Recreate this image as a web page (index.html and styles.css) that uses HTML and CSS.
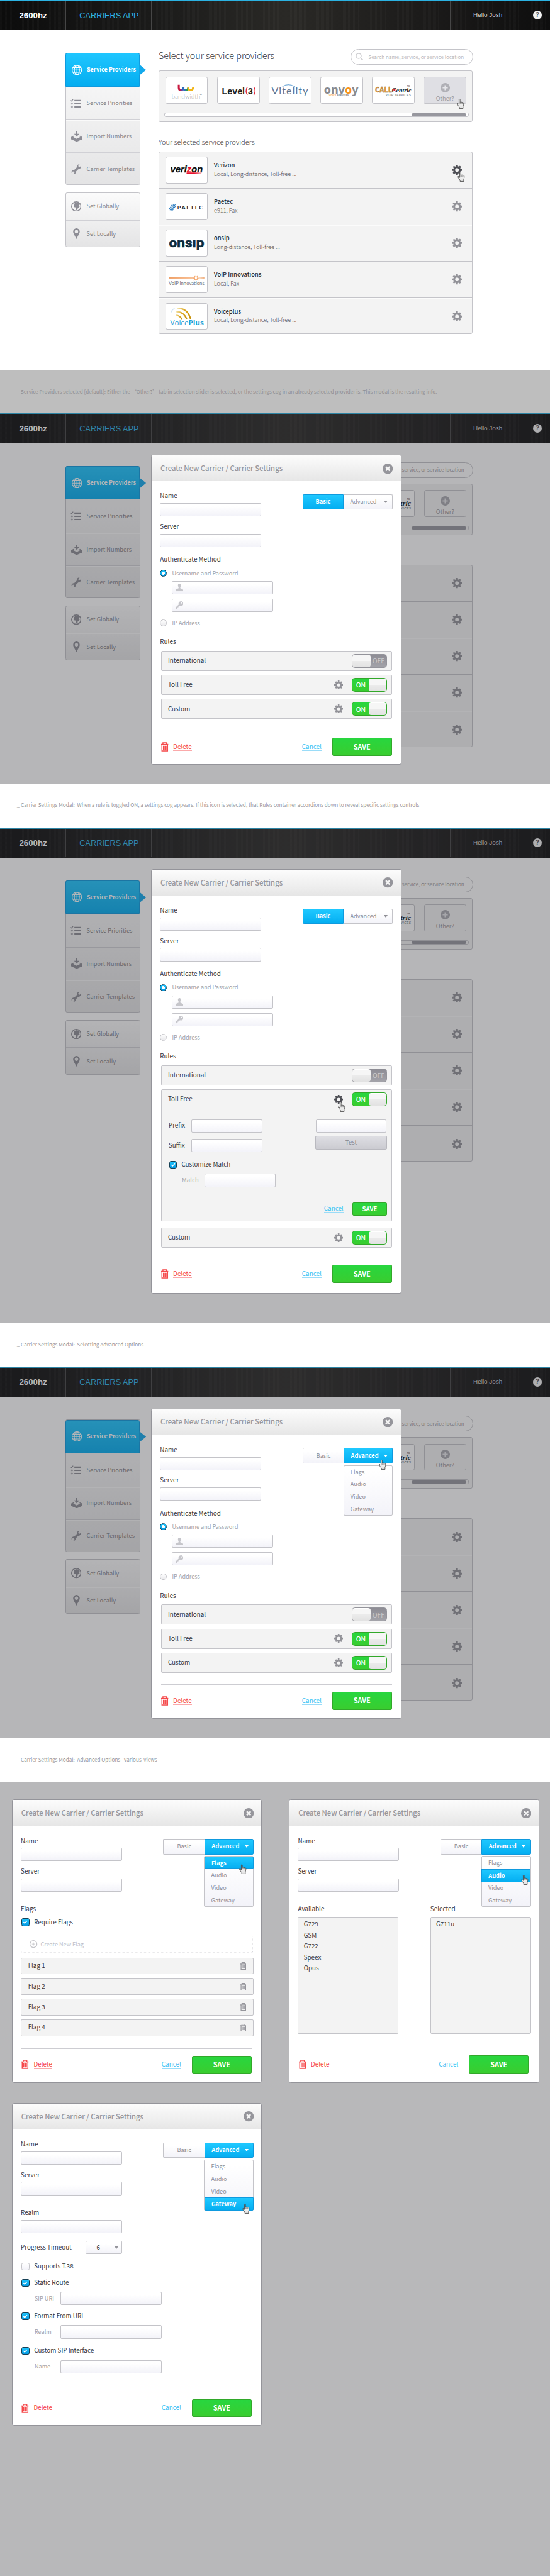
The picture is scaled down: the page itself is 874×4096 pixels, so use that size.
FILE: index.html
```
<!DOCTYPE html>
<html lang="en">
<head>
<meta charset="utf-8">
<title>2600hz Carriers App</title>
<link rel="stylesheet" href="styles.css">
</head>
<body>
<svg class="defs" width="0" height="0">
  <defs>
    <linearGradient id="hand-fill" x1="0" y1="0" x2="0" y2="1"><stop offset="0" stop-color="#fff"/><stop offset="1" stop-color="#e2e2e2"/></linearGradient>
    <linearGradient id="spark-fill" x1="0" x2="1" y1="0" y2="0"><stop offset="0" stop-color="#e8731f"/><stop offset=".7" stop-color="#f7a566"/><stop offset=".77" stop-color="#fff4ea"/><stop offset="1" stop-color="#e8883f"/></linearGradient>
    <linearGradient id="wave-fill" x1="0" x2="1" y1="0" y2="0"><stop offset="0" stop-color="#f3e3a8"/><stop offset=".6" stop-color="#dba41c"/><stop offset="1" stop-color="#c8920a"/></linearGradient>
    <linearGradient id="swoosh-fill" x1="0" x2="1" y1="0" y2="0"><stop offset="0" stop-color="#e8112d"/><stop offset=".5" stop-color="#e8112d"/><stop offset="1" stop-color="#f8c9cf"/></linearGradient>
  </defs>
  <symbol id="gear" viewBox="0 0 24 24"><g fill="none" stroke="currentColor"><circle cx="12" cy="12" r="6.6" stroke-width="4.6"/><path stroke-width="4.4" d="M12 0v4M12 20v4M0 12h4M20 12h4M3.7 3.7l2.6 2.6M17.7 17.7l2.6 2.6M3.7 20.3l2.6-2.6M17.7 6.3l2.6-2.6"/></g></symbol>
  <symbol id="globe" viewBox="0 0 24 24"><g fill="none" stroke="currentColor" stroke-width="1.5"><circle cx="12" cy="12" r="11.1"/><ellipse cx="12" cy="12" rx="6" ry="11.1"/><path d="M12 1v22M1 12h22M2.6 6.4h18.8M2.6 17.6h18.8"/></g></symbol>
  <symbol id="checklist" viewBox="0 0 26 22"><g fill="none" stroke="currentColor"><path stroke-width="3" d="M9 4.2h16.5M9 11.7h16.5M9 19h16.5"/><path stroke-width="1.8" d="M.8 3.6l2 2L6.2 1"/><circle cx="3.4" cy="11.7" r="1.6" stroke-width="1.2"/><circle cx="3.4" cy="19" r="1.6" stroke-width="1.2"/></g></symbol>
  <symbol id="inbox" viewBox="0 0 26 24"><path fill="currentColor" d="M11.2 0h3.4v5.6h4.6L13 12.2 6.8 5.6h4.4zM5.6 10L7 11.6 4.6 13l8.4 4.4 8.4-4.4-2.4-1.4L20.4 10l5.6 3v5.4L13 24 0 18.4V13z"/></symbol>
  <symbol id="wrench" viewBox="0 0 24 24"><path fill="currentColor" d="M22.8 4.2c.8 3.400-.6 6.200-3.600 7-1.400.4-2.400.4-3.200 1.200l-4 4c-.8.8-.8 1.800-1.100 3.200-.5 2.600-3 4.200-5.700 4l2.600-3.300-.9-2.700-2.700-.8L1 20c-.5-3.400 1.300-5.900 4.200-6.500 1.400-.3 2.400-.3 3.200-1.100l4.200-4.200c.8-.8.600-1.700.9-3.100C14.100 2.200 16.600.2 19.600.6l-3 3.200.8 2.500 2.600.8z"/></symbol>
  <symbol id="earth" viewBox="0 0 24 24"><circle cx="12" cy="12" r="10.800" fill="none" stroke="currentColor" stroke-width="2.400"/><path fill="currentColor" d="M6 6.600L9.500 4l4-.9L18 4.600l2.200 3.600-1.600 1 1.200 3-1.800 3-2.200-.6-.8 4.400-2.200 2.200-1.600-2-.4-5-4-.6-1-3.400 1.800-2.600z"/></symbol>
  <symbol id="pin" viewBox="0 0 16 25"><path fill="currentColor" fill-rule="evenodd" d="M8 0a7.700 7.700 0 0 1 7.700 7.700C15.700 12 11 18 8 25 5 18 .3 12 .3 7.700A7.700 7.700 0 0 1 8 0zm0 3.800a4 4 0 1 0 0 8 4 4 0 0 0 0-8z"/></symbol>
  <symbol id="user" viewBox="0 0 18 18"><path fill="currentColor" d="M9 0c2.300 0 3.600 1.700 3.400 4.200-.1 2-.8 3.300-1.400 4.200v2.200c1 1.400 6.600 1.500 7 5V18H0v-2.400c.4-3.500 6-3.600 7-5V8.400c-.6-.9-1.300-2.200-1.400-4.200C5.400 1.700 6.700 0 9 0z"/></symbol>
  <symbol id="key" viewBox="0 0 18 18"><path fill="currentColor" fill-rule="evenodd" d="M12.400 0A5.600 5.600 0 1 1 10.200 10.700L8.600 12.200H6.800V14H5v1.800H3.400V18H0v-3.400l7.300-7A5.600 5.600 0 0 1 12.400 0zm1.800 2.400a1.600 1.600 0 1 0 0 3.200 1.600 1.600 0 0 0 0-3.200z"/></symbol>
  <symbol id="trash" viewBox="0 0 17 22"><g fill="none" stroke="currentColor"><path stroke-width="2.200" d="M0 5.200h17M4.300 4.600V1.300h8.400v3.300M1.900 5.600v15.100h13.200V5.600"/><path stroke-width="1.700" d="M5.200 8.500v9.500M7.500 8.500v9.500M9.700 8.500v9.500M11.900 8.500v9.500"/></g></symbol>
  <symbol id="close" viewBox="0 0 24 24"><circle cx="12" cy="12" r="12" fill="#95959b"/><path d="M7.500 7.500l9 9M16.500 7.500l-9 9" stroke="#f4f4f4" stroke-width="3.600"/></symbol>
  <symbol id="plus" viewBox="0 0 22 22"><circle cx="11" cy="11" r="11" fill="currentColor"/><path d="M11 5v12M5 11h12" stroke="#e6e6ea" stroke-width="3"/></symbol>
  <symbol id="search" viewBox="0 0 18 18"><g fill="none" stroke="currentColor"><circle cx="7.300" cy="7.300" r="5.900" stroke-width="2.200"/><path d="M11.800 11.800l5 5" stroke-width="2.800"/></g></symbol>
  <symbol id="tick" viewBox="0 0 18 18"><path d="M4.200 9l3.300 3.300 6.400-6.500" fill="none" stroke="#fff" stroke-width="2.700"/></symbol>
  <symbol id="hand" viewBox="0 0 18 24"><path fill="url(#hand-fill)" stroke="#333" stroke-width="1.200" stroke-linejoin="round" d="M5.200 1.400C5.500.4 7.400.4 7.700 1.400V8c.2-1 2.500-1 2.800.2.400-.9 2.600-.7 2.800.5.600-.8 2.500-.5 2.800 1.100.6 3-.1 5.300-1.200 8.200v4.900H6.200V20C5 18 2.200 15 .8 12.400c-.4-1.300 1-2 2.100-1l2.300 2.300z"/><path d="M7.700 8v4M10.500 8.400v3.600M13.300 9v3" stroke="#333" stroke-width="1"/></symbol>
</svg>

<div class="page">

<section class="scene">
  <header class="bar">
    <div class="bar-logo">2600hz</div><div class="bar-app">CARRIERS APP</div>
    <div class="bar-user">Hello Josh</div><div class="bar-help"><span class="help">?</span></div>
  </header>
  <div class="cols">
    <nav class="side">
      <div class="menu">
        <div class="item item-on"><svg class="ic24"><use href="#globe"/></svg><span>Service Providers</span><i class="tip"></i></div>
        <div class="item"><svg class="ic-list"><use href="#checklist"/></svg><span>Service Priorities</span></div>
        <div class="item"><svg class="ic-in"><use href="#inbox"/></svg><span>Import Numbers</span></div>
        <div class="item"><svg class="ic24"><use href="#wrench"/></svg><span>Carrier Templates</span></div>
      </div>
      <div class="menu menu-b">
        <div class="item"><svg class="ic24"><use href="#earth"/></svg><span>Set Globally</span></div>
        <div class="item"><svg class="ic-pin"><use href="#pin"/></svg><span>Set Locally</span></div>
      </div>
    </nav>
    <main class="main">
      <div class="head"><h1>Select your service providers</h1>
        <div class="search"><svg class="ic18"><use href="#search"/></svg><span>Search name, service, or service location</span></div></div>
      <div class="slider">
        <div class="tiles">
          <div class="tile"><svg viewBox="0 0 99 62"><g fill="none" stroke-width="4.600"><path stroke="#c8193f" d="M30 17.500v7.500q0 5 5 5.500"/><path stroke="#6a3fa0" d="M34 30.600q7 .5 7.500-8"/><path stroke="#2c6fc0" d="M40.500 24q0 6.500 6 6.600"/><path stroke="#2f9e4f" d="M46 30.600q6.500 0 6.800-8"/><path stroke="#f0b51a" d="M52.600 24q0 6.600 5.800 6.600 5.800 0 5.800-8.200"/></g><text x="13" y="51" class="lg-band" textLength="68" lengthAdjust="spacingAndGlyphs">bandwidth</text><text x="80" y="43" class="lg-tiny">™</text></svg></div>
          <div class="tile"><svg viewBox="0 0 99 62"><text x="9.500" y="40" class="lg-level" textLength="55" lengthAdjust="spacingAndGlyphs">Level</text><text x="72" y="40" class="lg-level">3</text><path d="M70.500 23q-6 9 0 19M86 23q5.500 9 0 19" fill="none" stroke="#e0263a" stroke-width="2.200"/></svg></div>
          <div class="tile"><svg viewBox="0 0 99 62"><text x="5" y="41" class="lg-vit" textLength="87">Vitelity</text><path d="M31 22q14-9 29 0" fill="none" stroke="#7fb2dc" stroke-width="1.800"/></svg></div>
          <div class="tile"><svg viewBox="0 0 99 62"><text x="7" y="38.500" class="lg-onv" textLength="82" lengthAdjust="spacingAndGlyphs">onv<tspan fill="#f7941e">o</tspan>y</text><text x="19" y="44.500" class="lg-tiny" textLength="47"><tspan fill="#f7941e">VOICE</tspan> SERVICES</text></svg></div>
          <div class="tile"><svg viewBox="0 0 99 62"><text x="6" y="36" class="lg-call" textLength="40" lengthAdjust="spacingAndGlyphs">CALL</text><text x="46" y="36" class="lg-cent" textLength="46" lengthAdjust="spacingAndGlyphs">Centric</text><circle cx="52" cy="29.500" r="2.600" fill="#e2202c"/><text x="31" y="45.500" class="lg-voip" textLength="60">VOIP SERVICES</text><text x="82" y="22.500" class="lg-tiny">TM</text></svg></div>
          <div class="tile tile-other"><svg class="ic22"><use href="#plus"/></svg><span>Other?</span><svg class="hand"><use href="#hand"/></svg></div>
        </div>
        <div class="track"><i class="thumb"></i></div>
      </div>
      <h2>Your selected service providers</h2>
      <div class="list">
        <div class="prov"><div class="tile"><svg viewBox="0 0 99 62"><text x="10" y="36.500" class="lg-ver" textLength="77" lengthAdjust="spacingAndGlyphs">veri<tspan fill="#e8112d">z</tspan>on</text><path d="M49 36.500h37l-5 3.500H48z" fill="url(#swoosh-fill)"/></svg></div><div class="who"><b>Verizon</b><span>Local, Long-distance, Toll-free ...</span></div><div class="cog cog-dark"><svg class="gear"><use href="#gear"/></svg><svg class="hand"><use href="#hand"/></svg></div></div>
        <div class="prov"><div class="tile"><svg viewBox="0 0 99 62"><path d="M7 37L15 25M8.800 39.500L18.500 25M12 39.500L22 25M15.200 39.500L22 29.500" stroke="#2d7dc0" stroke-width="1.700"/><text x="26.500" y="38" class="lg-pae" textLength="63" lengthAdjust="spacingAndGlyphs">PAETEC</text></svg></div><div class="who"><b>Paetec</b><span>e911, Fax</span></div><div class="cog"><svg class="gear"><use href="#gear"/></svg></div></div>
        <div class="prov"><div class="tile"><svg viewBox="0 0 99 62"><text x="6.500" y="40.500" class="lg-ons" textLength="84" lengthAdjust="spacingAndGlyphs">onsıp</text></svg></div><div class="who"><b>onsip</b><span>Long-distance, Toll-free ...</span></div><div class="cog"><svg class="gear"><use href="#gear"/></svg></div></div>
        <div class="prov"><div class="tile"><svg viewBox="0 0 99 62"><rect x="7" y="26" width="84" height="2" fill="url(#spark-fill)"/><path d="M71 12l1 12 5-4-4 6 6 1.500-6 1.200 4 6-5-4-1 12-1-12-5 4 4-6-6-1.200 6-1.500-4-6 5 4z" fill="#f3a263"/><circle cx="71" cy="27" r="2.500" fill="#fff"/><text x="6" y="43.500" class="lg-inn" textLength="85" lengthAdjust="spacingAndGlyphs">VoIP Innovations</text></svg></div><div class="who"><b>VoIP Innovations</b><span>Local, Fax</span></div><div class="cog"><svg class="gear"><use href="#gear"/></svg></div></div>
        <div class="prov"><div class="tile"><svg viewBox="0 0 99 62"><g fill="none" stroke="url(#wave-fill)"><path d="M27 11q24-1 31 25" stroke-width="3.400"/><path d="M24 19q18 0 25 18" stroke-width="3.200"/><path d="M23 27q10 1 15 11" stroke-width="3"/></g><path d="M11 22q2-8 9-11" stroke="#cfe3f2" stroke-width="2" fill="none"/><text x="9.500" y="51.500" class="lg-vp" textLength="80" lengthAdjust="spacingAndGlyphs">Voice<tspan font-weight="700">Plus</tspan></text></svg></div><div class="who"><b>Voiceplus</b><span>Local, Long-distance, Toll-free ...</span></div><div class="cog"><svg class="gear"><use href="#gear"/></svg></div></div>
      </div>
    </main>
  </div>
</section>
<p class="note note-grey">_ Service Providers selected [default]: Either the ‘Other?’ tab in selection slider is selected, or the settings cog in an already selected provider is. This modal is the resulting info.</p>

<section class="scene scene-dim">
  <header class="bar">
    <div class="bar-logo">2600hz</div><div class="bar-app">CARRIERS APP</div>
    <div class="bar-user">Hello Josh</div><div class="bar-help"><span class="help">?</span></div>
  </header>
  <div class="cols">
    <nav class="side">
      <div class="menu">
        <div class="item item-on"><svg class="ic24"><use href="#globe"/></svg><span>Service Providers</span><i class="tip"></i></div>
        <div class="item"><svg class="ic-list"><use href="#checklist"/></svg><span>Service Priorities</span></div>
        <div class="item"><svg class="ic-in"><use href="#inbox"/></svg><span>Import Numbers</span></div>
        <div class="item"><svg class="ic24"><use href="#wrench"/></svg><span>Carrier Templates</span></div>
      </div>
      <div class="menu menu-b">
        <div class="item"><svg class="ic24"><use href="#earth"/></svg><span>Set Globally</span></div>
        <div class="item"><svg class="ic-pin"><use href="#pin"/></svg><span>Set Locally</span></div>
      </div>
    </nav>
    <main class="main">
      <div class="head"><div class="search search-cut"><span>service, or service location</span></div></div>
      <div class="slider">
        <div class="tiles tiles-end">
          <div class="tile"><svg viewBox="0 0 99 62"><text x="66.500" y="36" class="lg-cent" textLength="25" lengthAdjust="spacingAndGlyphs">tric</text><text x="67" y="45.500" class="lg-voip" textLength="24">VICES</text><text x="82" y="22.500" class="lg-tiny">TM</text></svg></div>
          <div class="tile tile-other"><svg class="ic22"><use href="#plus"/></svg><span>Other?</span></div>
        </div>
        <div class="track"><i class="thumb"></i></div>
      </div>
      <h2></h2>
      <div class="list">
        <div class="prov"><div class="cog"><svg class="gear"><use href="#gear"/></svg></div></div>
        <div class="prov"><div class="cog"><svg class="gear"><use href="#gear"/></svg></div></div>
        <div class="prov"><div class="cog"><svg class="gear"><use href="#gear"/></svg></div></div>
        <div class="prov"><div class="cog"><svg class="gear"><use href="#gear"/></svg></div></div>
        <div class="prov"><div class="cog"><svg class="gear"><use href="#gear"/></svg></div></div>
      </div>
    </main>
  </div>
  <div class="shade"></div>
  <div class="modal modal-over">
    <div class="m-head"><span>Create New Carrier / Carrier Settings</span><svg class="ic24"><use href="#close"/></svg></div>
    <div class="m-body">
      <div class="top">
        <div class="fields"><div class="label">Name</div><div class="input"></div><div class="label">Server</div><div class="input"></div></div>
        <div class="tabs"><div class="tab on">Basic</div><div class="tab adv">Advanced<i class="tri"></i></div></div>
      </div>
      <div class="label auth">Authenticate Method</div>
      <div class="opt opt-a"><i class="radio radio-on"></i>Username and Password</div>
      <div class="input in-ic"><svg class="ic18"><use href="#user"/></svg></div>
      <div class="input in-ic"><svg class="ic18"><use href="#key"/></svg></div>
      <div class="opt opt-b"><i class="radio"></i>IP Address</div>
      <div class="label rules-h">Rules</div>
      <div class="rules">
        <div class="rule"><div class="r-line"><span>International</span><div class="sw sw-off"><i></i>OFF</div></div></div>
        <div class="rule"><div class="r-line"><span>Toll Free</span><svg class="gear20"><use href="#gear"/></svg><div class="sw">ON<i></i></div></div></div>
        <div class="rule"><div class="r-line"><span>Custom</span><svg class="gear20"><use href="#gear"/></svg><div class="sw">ON<i></i></div></div></div>
      </div>
      <div class="foot foot-r"><svg class="trash"><use href="#trash"/></svg><a class="del">Delete</a><a class="cancel">Cancel</a><div class="save">SAVE</div></div>
    </div>
  </div>
</section>
<p class="note">_ Carrier Settings Modal: &nbsp;When a rule is toggled ON, a settings cog appears. If this icon is selected, that Rules container accordions down to reveal specific settings controls</p>

<section class="scene scene-dim scene-tall">
  <header class="bar">
    <div class="bar-logo">2600hz</div><div class="bar-app">CARRIERS APP</div>
    <div class="bar-user">Hello Josh</div><div class="bar-help"><span class="help">?</span></div>
  </header>
  <div class="cols">
    <nav class="side">
      <div class="menu">
        <div class="item item-on"><svg class="ic24"><use href="#globe"/></svg><span>Service Providers</span><i class="tip"></i></div>
        <div class="item"><svg class="ic-list"><use href="#checklist"/></svg><span>Service Priorities</span></div>
        <div class="item"><svg class="ic-in"><use href="#inbox"/></svg><span>Import Numbers</span></div>
        <div class="item"><svg class="ic24"><use href="#wrench"/></svg><span>Carrier Templates</span></div>
      </div>
      <div class="menu menu-b">
        <div class="item"><svg class="ic24"><use href="#earth"/></svg><span>Set Globally</span></div>
        <div class="item"><svg class="ic-pin"><use href="#pin"/></svg><span>Set Locally</span></div>
      </div>
    </nav>
    <main class="main">
      <div class="head"><div class="search search-cut"><span>service, or service location</span></div></div>
      <div class="slider">
        <div class="tiles tiles-end">
          <div class="tile"><svg viewBox="0 0 99 62"><text x="66.500" y="36" class="lg-cent" textLength="25" lengthAdjust="spacingAndGlyphs">tric</text><text x="67" y="45.500" class="lg-voip" textLength="24">VICES</text><text x="82" y="22.500" class="lg-tiny">TM</text></svg></div>
          <div class="tile tile-other"><svg class="ic22"><use href="#plus"/></svg><span>Other?</span></div>
        </div>
        <div class="track"><i class="thumb"></i></div>
      </div>
      <h2></h2>
      <div class="list">
        <div class="prov"><div class="cog"><svg class="gear"><use href="#gear"/></svg></div></div>
        <div class="prov"><div class="cog"><svg class="gear"><use href="#gear"/></svg></div></div>
        <div class="prov"><div class="cog"><svg class="gear"><use href="#gear"/></svg></div></div>
        <div class="prov"><div class="cog"><svg class="gear"><use href="#gear"/></svg></div></div>
        <div class="prov"><div class="cog"><svg class="gear"><use href="#gear"/></svg></div></div>
      </div>
    </main>
  </div>
  <div class="shade"></div>
  <div class="modal modal-over modal-tall">
    <div class="m-head"><span>Create New Carrier / Carrier Settings</span><svg class="ic24"><use href="#close"/></svg></div>
    <div class="m-body">
      <div class="top">
        <div class="fields"><div class="label">Name</div><div class="input"></div><div class="label">Server</div><div class="input"></div></div>
        <div class="tabs"><div class="tab on">Basic</div><div class="tab adv">Advanced<i class="tri"></i></div></div>
      </div>
      <div class="label auth">Authenticate Method</div>
      <div class="opt opt-a"><i class="radio radio-on"></i>Username and Password</div>
      <div class="input in-ic"><svg class="ic18"><use href="#user"/></svg></div>
      <div class="input in-ic"><svg class="ic18"><use href="#key"/></svg></div>
      <div class="opt opt-b"><i class="radio"></i>IP Address</div>
      <div class="label rules-h">Rules</div>
      <div class="rules">
        <div class="rule"><div class="r-line"><span>International</span><div class="sw sw-off"><i></i>OFF</div></div></div>
        <div class="rule rule-open">
          <div class="r-line"><span>Toll Free</span><div class="gear20 gear-dark"><svg class="gear20"><use href="#gear"/></svg><svg class="hand"><use href="#hand"/></svg></div><div class="sw">ON<i></i></div></div>
          <div class="r-more">
            <div class="r-grid">
              <div class="r-left"><div class="r-field"><span>Prefix</span><div class="input"></div></div><div class="r-field"><span>Suffix</span><div class="input"></div></div></div>
              <div class="r-right"><div class="input"></div><div class="test">Test</div></div>
            </div>
            <div class="check r-check"><i class="box box-on"><svg><use href="#tick"/></svg></i>Customize Match</div>
            <div class="r-match"><span>Match</span><div class="input"></div></div>
            <div class="r-foot"><a class="cancel">Cancel</a><div class="save save-s">SAVE</div></div>
          </div>
        </div>
        <div class="rule"><div class="r-line"><span>Custom</span><svg class="gear20"><use href="#gear"/></svg><div class="sw">ON<i></i></div></div></div>
      </div>
      <div class="foot foot-r foot-t"><svg class="trash"><use href="#trash"/></svg><a class="del">Delete</a><a class="cancel">Cancel</a><div class="save">SAVE</div></div>
    </div>
  </div>
</section>
<p class="note">_ Carrier Settings Modal: &nbsp;Selecting Advanced Options</p>

<section class="scene scene-dim scene-last">
  <header class="bar">
    <div class="bar-logo">2600hz</div><div class="bar-app">CARRIERS APP</div>
    <div class="bar-user">Hello Josh</div><div class="bar-help"><span class="help">?</span></div>
  </header>
  <div class="cols">
    <nav class="side">
      <div class="menu">
        <div class="item item-on"><svg class="ic24"><use href="#globe"/></svg><span>Service Providers</span><i class="tip"></i></div>
        <div class="item"><svg class="ic-list"><use href="#checklist"/></svg><span>Service Priorities</span></div>
        <div class="item"><svg class="ic-in"><use href="#inbox"/></svg><span>Import Numbers</span></div>
        <div class="item"><svg class="ic24"><use href="#wrench"/></svg><span>Carrier Templates</span></div>
      </div>
      <div class="menu menu-b">
        <div class="item"><svg class="ic24"><use href="#earth"/></svg><span>Set Globally</span></div>
        <div class="item"><svg class="ic-pin"><use href="#pin"/></svg><span>Set Locally</span></div>
      </div>
    </nav>
    <main class="main">
      <div class="head"><div class="search search-cut"><span>service, or service location</span></div></div>
      <div class="slider">
        <div class="tiles tiles-end">
          <div class="tile"><svg viewBox="0 0 99 62"><text x="66.500" y="36" class="lg-cent" textLength="25" lengthAdjust="spacingAndGlyphs">tric</text><text x="67" y="45.500" class="lg-voip" textLength="24">VICES</text><text x="82" y="22.500" class="lg-tiny">TM</text></svg></div>
          <div class="tile tile-other"><svg class="ic22"><use href="#plus"/></svg><span>Other?</span></div>
        </div>
        <div class="track"><i class="thumb"></i></div>
      </div>
      <h2></h2>
      <div class="list">
        <div class="prov"><div class="cog"><svg class="gear"><use href="#gear"/></svg></div></div>
        <div class="prov"><div class="cog"><svg class="gear"><use href="#gear"/></svg></div></div>
        <div class="prov"><div class="cog"><svg class="gear"><use href="#gear"/></svg></div></div>
        <div class="prov"><div class="cog"><svg class="gear"><use href="#gear"/></svg></div></div>
        <div class="prov"><div class="cog"><svg class="gear"><use href="#gear"/></svg></div></div>
      </div>
    </main>
  </div>
  <div class="shade"></div>
  <div class="modal modal-over">
    <div class="m-head"><span>Create New Carrier / Carrier Settings</span><svg class="ic24"><use href="#close"/></svg></div>
    <div class="m-body">
      <div class="top">
        <div class="fields"><div class="label">Name</div><div class="input"></div><div class="label">Server</div><div class="input"></div></div>
        <div class="tabs"><div class="tab">Basic</div><div class="tab adv on">Advanced<i class="tri"></i></div>
          <div class="drop"><span>Flags</span><span>Audio</span><span>Video</span><span>Gateway</span></div><svg class="hand hand-tab"><use href="#hand"/></svg></div>
      </div>
      <div class="label auth">Authenticate Method</div>
      <div class="opt opt-a"><i class="radio radio-on"></i>Username and Password</div>
      <div class="input in-ic"><svg class="ic18"><use href="#user"/></svg></div>
      <div class="input in-ic"><svg class="ic18"><use href="#key"/></svg></div>
      <div class="opt opt-b"><i class="radio"></i>IP Address</div>
      <div class="label rules-h">Rules</div>
      <div class="rules">
        <div class="rule"><div class="r-line"><span>International</span><div class="sw sw-off"><i></i>OFF</div></div></div>
        <div class="rule"><div class="r-line"><span>Toll Free</span><svg class="gear20"><use href="#gear"/></svg><div class="sw">ON<i></i></div></div></div>
        <div class="rule"><div class="r-line"><span>Custom</span><svg class="gear20"><use href="#gear"/></svg><div class="sw">ON<i></i></div></div></div>
      </div>
      <div class="foot foot-r"><svg class="trash"><use href="#trash"/></svg><a class="del">Delete</a><a class="cancel">Cancel</a><div class="save">SAVE</div></div>
    </div>
  </div>
</section>
<p class="note note-last">_ Carrier Settings Modal: &nbsp;Advanced Options--Various &nbsp;views</p>

<section class="views">
  <div class="modal view-s">
    <div class="m-head"><span>Create New Carrier / Carrier Settings</span><svg class="ic24"><use href="#close"/></svg></div>
    <div class="m-body">
      <div class="top">
        <div class="fields"><div class="label">Name</div><div class="input"></div><div class="label">Server</div><div class="input"></div></div>
        <div class="tabs"><div class="tab">Basic</div><div class="tab adv on">Advanced<i class="tri"></i></div>
          <div class="drop"><span class="on on-first">Flags</span><span>Audio</span><span>Video</span><span>Gateway</span></div><svg class="hand hand-flags"><use href="#hand"/></svg></div>
      </div>
      <div class="label sub">Flags</div>
      <div class="check req"><i class="box box-on"><svg><use href="#tick"/></svg></i>Require Flags</div>
      <div class="newflag"><svg class="ic18" viewBox="0 0 18 18"><circle cx="9" cy="9" r="8.100" fill="none" stroke="#c4c4c9" stroke-width="1.800"/><path d="M9 5.500v7M5.500 9h7" stroke="#c4c4c9" stroke-width="1.300"/></svg>Create New Flag
        <svg class="dash" viewBox="0 0 541 40"><rect x=".5" y=".5" width="540" height="39" rx="4" fill="none" stroke="#c4c4c9" stroke-dasharray="5 5"/></svg></div>
      <div class="flags">
        <div class="flag"><span>Flag 1</span><svg class="trash-s"><use href="#trash"/></svg></div>
        <div class="flag"><span>Flag 2</span><svg class="trash-s"><use href="#trash"/></svg></div>
        <div class="flag"><span>Flag 3</span><svg class="trash-s"><use href="#trash"/></svg></div>
        <div class="flag"><span>Flag 4</span><svg class="trash-s"><use href="#trash"/></svg></div>
      </div>
      <div class="foot foot-v"><svg class="trash"><use href="#trash"/></svg><a class="del">Delete</a><a class="cancel">Cancel</a><div class="save">SAVE</div></div>
    </div>
  </div>

  <div class="modal view-s">
    <div class="m-head"><span>Create New Carrier / Carrier Settings</span><svg class="ic24"><use href="#close"/></svg></div>
    <div class="m-body">
      <div class="top">
        <div class="fields"><div class="label">Name</div><div class="input"></div><div class="label">Server</div><div class="input"></div></div>
        <div class="tabs"><div class="tab">Basic</div><div class="tab adv on">Advanced<i class="tri"></i></div>
          <div class="drop"><span>Flags</span><span class="on">Audio</span><span>Video</span><span>Gateway</span></div><svg class="hand hand-audio"><use href="#hand"/></svg></div>
      </div>
      <div class="lists">
        <div><div class="label">Available</div><div class="codecs"><span>G729</span><span>GSM</span><span>G722</span><span>Speex</span><span>Opus</span></div></div>
        <div><div class="label">Selected</div><div class="codecs"><span>G711u</span></div></div>
      </div>
      <div class="foot foot-l"><svg class="trash"><use href="#trash"/></svg><a class="del">Delete</a><a class="cancel">Cancel</a><div class="save">SAVE</div></div>
    </div>
  </div>

  <div class="modal view-l">
    <div class="m-head"><span>Create New Carrier / Carrier Settings</span><svg class="ic24"><use href="#close"/></svg></div>
    <div class="m-body">
      <div class="top">
        <div class="fields"><div class="label">Name</div><div class="input"></div><div class="label">Server</div><div class="input"></div></div>
        <div class="tabs"><div class="tab">Basic</div><div class="tab adv on">Advanced<i class="tri"></i></div>
          <div class="drop"><span>Flags</span><span>Audio</span><span>Video</span><span class="on on-last">Gateway</span></div><svg class="hand hand-gate"><use href="#hand"/></svg></div>
      </div>
      <div class="label sub">Realm</div>
      <div class="input realm"></div>
      <div class="timeout"><span>Progress Timeout</span><div class="select"><b>6</b><em><i class="tri"></i></em></div></div>
      <div class="check c-t38"><i class="box"></i>Supports T.38</div>
      <div class="check c-route"><i class="box box-on"><svg><use href="#tick"/></svg></i>Static Route</div>
      <div class="nest"><span>SIP URI</span><div class="input"></div></div>
      <div class="check c-next"><i class="box box-on"><svg><use href="#tick"/></svg></i>Format From URI</div>
      <div class="nest"><span>Realm</span><div class="input"></div></div>
      <div class="check c-next c-sip"><i class="box box-on"><svg><use href="#tick"/></svg></i>Custom SIP Interface</div>
      <div class="nest"><span>Name</span><div class="input"></div></div>
      <div class="foot foot-g"><svg class="trash"><use href="#trash"/></svg><a class="del">Delete</a><a class="cancel">Cancel</a><div class="save">SAVE</div></div>
    </div>
  </div>
</section>
</div>
</body>
</html>
```
FILE: styles.css
```
* { box-sizing: border-box; }
html { background: #b8b8ba; overflow: hidden; }
body { margin: 0; }
.defs { position: absolute; }
.page {
  zoom: .6828;
  width: 1280px;
  height: 5998px;
  overflow: hidden;
  background: #b8b8ba;
  font-family: "Noto Sans CJK SC", "Noto Sans", sans-serif;
  font-size: 14.400px;
  line-height: 20px;
  color: #38383d;
}
svg { display: block; flex: none; }
h1, h2, p { margin: 0; font-weight: 300; }
i, em { font-style: normal; }

/* scenes */
.scene { position: relative; height: 862px; background: #fff; }
.scene-dim { height: 863px; }
.scene-tall { height: 1154px; }
.scene-last { height: 864.500px; }
.shade { position: absolute; inset: 0; background: rgba(54, 54, 59, .36); }
.note { height: 102px; padding-left: 39px; background: #fff; color: #96969b; font-size: 11.900px; line-height: 100px; font-weight: 400; white-space: pre; }
.note-grey { height: 100px; background: #bebebe; color: #8e8e93; }
.note-last { height: 101.500px; }

/* header bar */
.bar {
  display: flex;
  height: 70px;
  border-top: 3px solid #2bb2e2;
  background: repeating-linear-gradient(90deg, rgba(255,255,255,.025) 0 1px, transparent 1px 3px), linear-gradient(90deg, #0c0c0c, #1c1c1b 30%, #2a2926 52%, #1d1c1b 75%, #0e0e0e);
  font-family: "Liberation Sans", Arial, sans-serif;
  color: #fff;
}
.bar > div { height: 67px; }
.bar-logo { width: 154px; padding-left: 44.500px; border-right: 1px solid #464646; font-size: 19.500px; font-weight: 700; line-height: 68px; }
.bar-app { width: 199px; padding-left: 31px; border-right: 1px solid #464646; font-size: 18.700px; line-height: 68px; color: #2fb4e4; white-space: nowrap; }
.bar-user { width: 181px; margin-left: 694px; border: 1px solid #464646; border-width: 0 1px; padding-left: 53px; font-size: 14.500px; line-height: 64px; color: #d2d2d2; white-space: nowrap; }
.bar-help { padding: 22px 0 0 12px; }
.help { display: block; width: 21px; height: 21px; border-radius: 50%; background: #f2f2f2; color: #555; font-size: 15px; font-weight: 700; line-height: 21px; text-align: center; }

/* sidebar */
.cols { display: flex; padding-left: 152px; }
.side { width: 174px; margin-right: 43px; padding-top: 53px; }
.menu { height: 308px; border: 1px solid #c4c4c9; border-radius: 4px; background: linear-gradient(#fbfbfb, #e4e4e5); }
.menu-b { height: 127.500px; margin-top: 17px; }
.item { position: relative; display: flex; align-items: center; height: 76px; padding-left: 12px; border-bottom: 1px solid #d0d0d5; box-shadow: 0 1px #fff; color: #85858b; font-size: 13.600px; }
.item svg { color: #8d8d95; }
.item span { position: absolute; left: 48px; top: 50%; margin-top: -10px; white-space: nowrap; }
.item:last-child { border: 0; box-shadow: none; height: 75px; }
.item:nth-child(2) { height: 79px; }
.item:nth-child(3) { height: 76px; }
.menu .item-on { height: 78px; margin: -1px -1px 0; padding-left: 13px; border: 1px solid #0f9ade; border-radius: 4px 4px 0 0; background: linear-gradient(#1fc6ff, #04adf0); box-shadow: none; color: #fff; font-weight: 700; font-size: 13.400px; }
.item-on svg { color: #fff; }
.tip { position: absolute; right: -16px; top: 25px; width: 16px; height: 26px; background: #13a9ec; clip-path: polygon(0 0, 100% 50%, 0 100%); }
.menu-b .item { height: 64px; }
.menu-b .item:last-child { height: 62px; }
.ic24 { width: 24px; height: 24px; }
.ic22 { width: 22px; height: 22px; }
.ic18 { width: 18px; height: 18px; }
.ic-list { width: 26px; height: 22px; margin-left: -2px; }
.ic-in { width: 26px; height: 24px; }
.ic-pin { width: 16px; height: 25px; margin-left: 4px; }

/* provider panels */
.main { width: 733px; padding-top: 44px; }
.head { display: flex; justify-content: space-between; height: 50px; }
h1 { padding-top: 1px; font-size: 21px; line-height: 30px; color: #38383d; white-space: nowrap; }
.search { display: flex; align-items: center; width: 286px; height: 37px; padding-left: 10px; border: 1px solid #c4c4c9; border-radius: 19px; background: #fff; color: #bcbcc1; font-size: 11.800px; white-space: nowrap; }
.search svg { margin-right: 12px; color: #cfcfd2; }
.search-cut { margin-left: auto; justify-content: flex-end; padding-right: 20px; color: #a2a2a8; }
.slider { width: 731px; height: 120px; padding: 14px 14.500px 0; border: 1px solid #c4c4c9; border-radius: 4px; background: #f3f3f3; }
.tiles { display: flex; gap: 21.300px; }
.tiles-end { padding-left: 481.200px; }
.tile { position: relative; flex: none; width: 99px; height: 62.500px; border: 1px solid #c4c4c9; border-radius: 4px; background: #fff; overflow: visible; }
.tile > svg[viewBox] { width: 97px; height: 60.500px; }
.tile-other { display: flex; flex-direction: column; align-items: center; padding-top: 12px; background: #dfdfe4; color: #9b9ba1; font-size: 13.500px; }
.tile-other span { margin-top: 5px; }
.scene-dim .tile-other { background: transparent; }
.tile-other .ic22 { color: #b0b0b6; }
.scene-dim .tile-other .ic22 { color: #a9a9af; }
.hand { position: absolute; width: 17.500px; height: 24px; z-index: 5; }
.tile-other .hand { left: 76px; top: 49px; }
.track { width: 708px; height: 11px; margin: 20px 0 0 -2.500px; padding: 1px 4px; border: 1px solid #c4c4c9; border-radius: 4px; background: #fff; display: flex; justify-content: flex-end; }
.scene-dim .track { background: transparent; }
.thumb { width: 127px; height: 7px; border-radius: 4px; background: #97979e; }
h2 { height: 69px; padding-top: 34px; font-size: 16.200px; line-height: 24px; color: #38383d; }
.list { width: 731px; height: 425px; border: 1px solid #c4c4c9; border-radius: 4px; background: #f3f3f3; }
.prov { display: flex; align-items: center; height: 85px; padding-left: 14.500px; border-bottom: 1px solid #c4c4c9; box-shadow: 0 1px #fff; }
.prov:last-child { border: 0; box-shadow: none; }
.who { margin-left: 14px; margin-top: -2px; color: #4a4a50; font-size: 13.400px; font-weight: 300; }
.who b { display: block; color: #2e2e33; font-size: 13.800px; font-weight: 500; }
.cog { position: relative; margin-left: auto; margin-right: 23px; color: #929298; }
.cog-dark { color: #4d4e54; }
.gear { width: 24px; height: 24px; }
.cog .hand { left: 13px; top: 15px; }

/* logos */
.lg-band { font: 300 15.500px "Lato", sans-serif; fill: #a8a8a8; }
.lg-level { font: 700 21px "Liberation Sans", sans-serif; fill: #1d1d1d; }
.lg-vit { font: 400 24px "Lato", sans-serif; fill: #5c7594; }
.lg-onv { font: 700 27px "Open Sans", sans-serif; fill: #8a8b8f; }
.lg-tiny { font: 700 5px "Liberation Sans", sans-serif; fill: #777; }
.lg-call { font: 700 19px "Open Sans", sans-serif; fill: #f0a23a; stroke: #6e5a3a; stroke-width: .6px; }
.lg-cent { font: italic 700 17px "Liberation Serif", serif; fill: #161616; }
.lg-voip { font: italic 700 7px "Liberation Sans", sans-serif; fill: #8b8b8b; }
.lg-ver { font: italic 700 22px "Liberation Sans", sans-serif; fill: #0d0d0d; stroke: #0d0d0d; stroke-width: .4px; }
.lg-ver tspan { stroke: #e8112d; }
.lg-pae { font: 700 11.500px "Lato", sans-serif; letter-spacing: 2px; fill: #1d1d1d; }
.lg-ons { font: 700 31px "Roboto", sans-serif; fill: #0b2b3d; stroke: #0b2b3d; stroke-width: .8px; }
.lg-inn { font: 400 11px "Lato", sans-serif; fill: #6f6f73; }
.lg-vp { font: 400 15px "Open Sans", sans-serif; fill: #1aa0d8; }

/* modals */
.modal { width: 582.500px; border: 1px solid #94949a; border-radius: 4px; background: #fff; }
.modal-over { position: absolute; left: 351.500px; top: 97px; height: 722.500px; }
.modal-tall { height: 988.500px; }
.m-head { display: flex; align-items: center; justify-content: space-between; height: 60.500px; padding: 0 17.500px 0 20.500px; border-radius: 3px 3px 0 0; background: linear-gradient(#fcfcfc, #e6e6e6); color: #97979c; font-size: 16.500px; font-weight: 500; }
.m-body { padding: 25px 18px 0 19.500px; }
.top { display: flex; justify-content: space-between; height: 128px; }
.fields .input:nth-child(2) { margin-bottom: 14px; }
.label { height: 20px; font-size: 14.500px; white-space: nowrap; }
.fields .label { margin-bottom: 6px; }
.input { width: 235px; height: 31px; border: 1px solid #c4c4c9; border-radius: 3px; background: linear-gradient(#fff 20%, #f3f3f9); }
.tabs { position: relative; display: flex; width: 210.500px; height: 36px; margin-top: 5px; color: #8f8f95; font-size: 13.500px; }
.tab { display: flex; align-items: center; justify-content: center; width: 96px; height: 36px; border: 1px solid #c4c4c9; border-radius: 3px 0 0 3px; background: linear-gradient(#fff 20%, #f3f3f9); }
.tab:first-child { border-right: 0; }
.tab.adv { width: 114.500px; justify-content: flex-start; padding-left: 15px; border-radius: 0 3px 3px 0; border-left: 0; }
.tab.on { border: 1px solid #0f9ade; background: linear-gradient(#1fc8ff, #04aef1); color: #fff; font-weight: 700; }
.tab.adv.on { padding-left: 15px; }
.tri { border: 4.500px solid transparent; border-top: 7px solid currentColor; border-bottom: 0; margin-left: auto; margin-right: 11px; }
.drop { position: absolute; left: 95px; top: 40px; width: 115.500px; height: 118px; border: 1px solid #c4c4c9; border-radius: 3px; background: linear-gradient(#fff 10%, #f3f3f9); z-index: 3; }
.drop span { display: block; height: 29px; padding-left: 15px; line-height: 28px; }
.drop .on { height: 30px; margin: 0 -1px -1px; border: 1px solid #0f9ade; background: linear-gradient(#1fc8ff, #04aef1); color: #fff; font-weight: 700; line-height: 27px; }
.drop .on-first { margin-top: -1px; margin-bottom: 0; border-radius: 3px 3px 0 0; }
.drop .on-last { border-radius: 0 0 3px 3px; }
.hand-tab { left: 178px; top: 27px; }
.hand-flags { left: 176px; top: 58px; }
.hand-audio { left: 188px; top: 84px; }
.hand-gate { left: 184px; top: 143px; }
.auth { margin-top: 20px; }
.opt { display: flex; align-items: center; height: 20px; color: #a2a2a7; font-size: 13.400px; }
.opt-a { margin: 11px 0 8px; }
.opt-b { margin: 16px 0 25px; }
.radio { width: 16px; height: 16px; margin-right: 12px; border: 1px solid #c4c4c9; border-radius: 50%; background: linear-gradient(#fff, #e9e9ec); }
.radio-on { border: 1.200px solid #16425a; background: radial-gradient(circle, #fff 0 3.200px, transparent 3.800px), linear-gradient(#1fc6ff, #0399e2); }
.in-ic { margin: 0 0 10px 28px; padding: 5.500px 6.500px; color: #c6c6cb; }
.in-ic + .opt { margin-top: 16px; }
.rules-h { margin-bottom: 10px; }
.rules { display: flex; flex-direction: column; gap: 9px; padding: 0 2px; }
.rule { height: 47px; border: 1px solid #c4c4c9; border-radius: 3px; background: #f3f3f3; }
.r-line { display: flex; align-items: center; height: 44px; padding: 0 10px 0 15px; }
.r-line > span { flex: 1; font-size: 14.500px; }
.gear20 { width: 21px; height: 21px; margin-right: 21px; color: #929298; }
.gear-dark { position: relative; }
.gear-dark .gear20 { color: #4d4e54; }
.gear-dark .hand { left: 10px; top: 16px; }
.sw { display: flex; align-items: center; justify-content: space-between; width: 82px; height: 32px; padding: 0 0 0 8px; border: 1px solid #32a82a; border-radius: 7px; background: linear-gradient(#28d63f, #39cd2f); color: #fff; font-size: 15px; font-weight: 500; }
.sw i { width: 42px; height: 29.500px; border-radius: 6px; background: linear-gradient(#f6f6f6 45%, #ebebeb 50%, #e2e2e2); border-top: 2px solid #fff; }
.sw-off { padding: 0 5px 0 0; border-color: #94949b; background: linear-gradient(#8d8c94, #a3a3a9); color: #cacace; font-weight: 400; }
.foot { display: flex; align-items: center; border-top: 1px solid #cdcdd2; height: 59px; padding-top: 15.500px; font-size: 14.500px; }
.foot-r { margin: 27px 2.500px 0; }
.foot-t { margin-top: 23px; }
.foot-v { margin: 28.500px 5px 0 2px; }
.foot-l { margin: 32.500px 5px 0 2px; }
.foot-g { margin: 43px 5px 0 2px; }
.trash { width: 17px; height: 22px; color: #f5484a; }
.del { margin-left: 11px; border-bottom: 1.500px solid #fba9aa; color: #f5484a; line-height: 18px; }
.cancel { margin-left: auto; border-bottom: 1.500px solid #9adcf8; color: #3cc2f4; line-height: 18px; }
.save { display: flex; align-items: center; justify-content: center; width: 139px; height: 42px; margin-left: 25px; border: 1px solid #32a82a; border-radius: 3px; background: linear-gradient(#28d63f, #39cd2f); color: #fff; font-size: 16px; font-weight: 700; }

/* expanded rule */
.rule-open { height: 308px; margin-bottom: 5px; }
.r-more { margin: 0 10.500px 0 15.500px; border-top: 1px solid #cdcdd2; }
.r-grid { display: flex; justify-content: space-between; padding: 23px 0 0 1px; }
.r-field { display: flex; align-items: center; justify-content: space-between; width: 218px; margin-bottom: 15px; }
.r-field .input, .r-right .input, .r-match .input { width: 165px; }
.test { width: 167px; height: 33px; margin: 7px 0 0 -1px; border: 1px solid #b9b9bf; border-radius: 3px; background: linear-gradient(#dedee3, #cbcbd1); color: #85858b; font-size: 14px; line-height: 29px; text-align: center; }
.check { display: flex; align-items: center; height: 18px; white-space: nowrap; }
.box { width: 18px; height: 18px; margin-right: 11px; border: 1px solid #c4c4c9; border-radius: 4px; background: linear-gradient(#fff, #f3f3f9); flex: none; }
.box-on { border: 1px solid #174156; background: linear-gradient(#1fc6ff, #0399e2); }
.box svg { width: 15px; height: 15px; }
.r-check { margin: 5px 0 0 2px; }
.r-match { display: flex; align-items: center; justify-content: space-between; width: 218px; margin: 12px 0 0 32px; color: #a2a2a7; font-size: 13.800px; }
.r-foot { display: flex; align-items: center; height: 43px; margin-top: 22.500px; padding-top: 13px; border-top: 1px solid #cdcdd2; }
.r-foot .cancel { margin-top: -4px; }
.save-s { width: 80.500px; height: 31px; margin-left: 21px; font-size: 14px; }

/* advanced views */
.views { display: grid; grid-template-columns: 582px 582px; column-gap: 63px; padding: 41.500px 0 0 27.500px; }
.view-s { height: 660.500px; }
.view-l { height: 751px; margin-top: 46.500px; }
.sub { margin-top: 31px; }
.req { margin: 11px 0 22.500px 2px; }
.newflag { position: relative; display: flex; align-items: center; height: 40px; padding-left: 21px; color: #c0c0c5; font-size: 13.400px; }
.newflag .ic18 { margin-right: 7px; }
.dash { position: absolute; left: 0; top: 0; width: 541px; height: 40px; }
.flags { display: grid; gap: 9px; margin: 11px 1px 0 0; }
.flag { display: flex; align-items: center; justify-content: space-between; height: 39px; padding: 0 15px 0 15.500px; border: 1px solid #c4c4c9; border-radius: 3px; background: #f3f3f3; }
.trash-s { width: 14px; height: 18px; color: #95959b; }
.lists { display: flex; justify-content: space-between; padding-top: 31px; }
.codecs { display: flex; flex-direction: column; width: 234px; height: 273.500px; margin-top: 7px; padding: 4px 0 0 12px; border: 1px solid #c4c4c9; border-radius: 3px; background: #f3f3f3; line-height: 25.700px; }
.realm { margin-top: 7px; }
.timeout { display: flex; align-items: center; justify-content: space-between; width: 235px; margin-top: 17px; }
.select { display: flex; width: 84.500px; height: 31px; border: 1px solid #c4c4c9; border-radius: 3px; background: linear-gradient(#fff 20%, #f3f3f9); line-height: 28px; text-align: center; }
.select b { width: 57px; font-weight: 400; }
.select em { display: flex; align-items: center; flex: 1; border-left: 1px solid #c4c4c9; color: #95959b; }
.select .tri { margin: 2px auto 0; }
.c-t38 { margin: 20px 0 20.500px 2px; }
.c-route { margin: 0 0 11px 2px; }
.c-next { margin: 17px 0 12.500px 2px; }
.c-sip { margin-top: 19.500px; }
.nest { display: flex; align-items: center; justify-content: space-between; width: 295.500px; margin-left: 32px; color: #a2a2a7; font-size: 13.400px; }
```
